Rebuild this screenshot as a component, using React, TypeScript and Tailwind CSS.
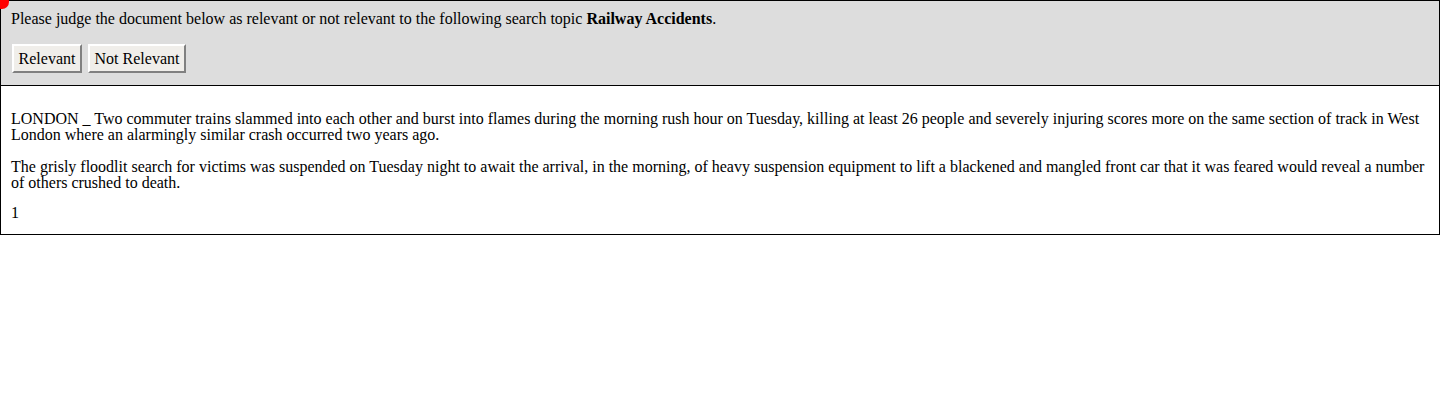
export default function App() {
  return (
    <div className="relative w-[1440px] font-['Liberation_Serif',serif] text-[16px] leading-[16px] text-black">
      {/* corner marker */}
      <div className="absolute -left-[5px] -top-[5px] h-[14px] w-[14px] rounded-full bg-[#ff0000]" />

      <div className="border border-black bg-[#dddddd] px-[10px] pb-[12px] pt-[10px]">
        <p>
          Please judge the document below as relevant or not relevant to the following search topic{" "}
          <b>Railway Accidents</b>.
        </p>
        <div className="mt-[17px] flex gap-[6px] pl-[1px]">
          <button className="h-[29px] w-[70px] border-2 border-t-white border-l-white border-b-[#808080] border-r-[#808080] bg-[#f0eeea]">
            Relevant
          </button>
          <button className="h-[29px] w-[98px] border-2 border-t-white border-l-white border-b-[#808080] border-r-[#808080] bg-[#f0eeea]">
            Not Relevant
          </button>
        </div>
      </div>

      <div className="border border-t-0 border-black px-[10px] pb-[13px] pt-[25px]">
        <p>
          LONDON _ Two commuter trains slammed into each other and burst into flames during the morning rush hour on
          Tuesday, killing at least 26 people and severely injuring scores more on the same section of track in West
          London where an alarmingly similar crash occurred two years ago.
        </p>
        <p className="mt-[16px]">
          The grisly floodlit search for victims was suspended on Tuesday night to await the arrival, in the morning,
          of heavy suspension equipment to lift a blackened and mangled front car that it was feared would reveal a
          number of others crushed to death.
        </p>
        <p className="mt-[14px]">1</p>
      </div>
    </div>
  );
}
